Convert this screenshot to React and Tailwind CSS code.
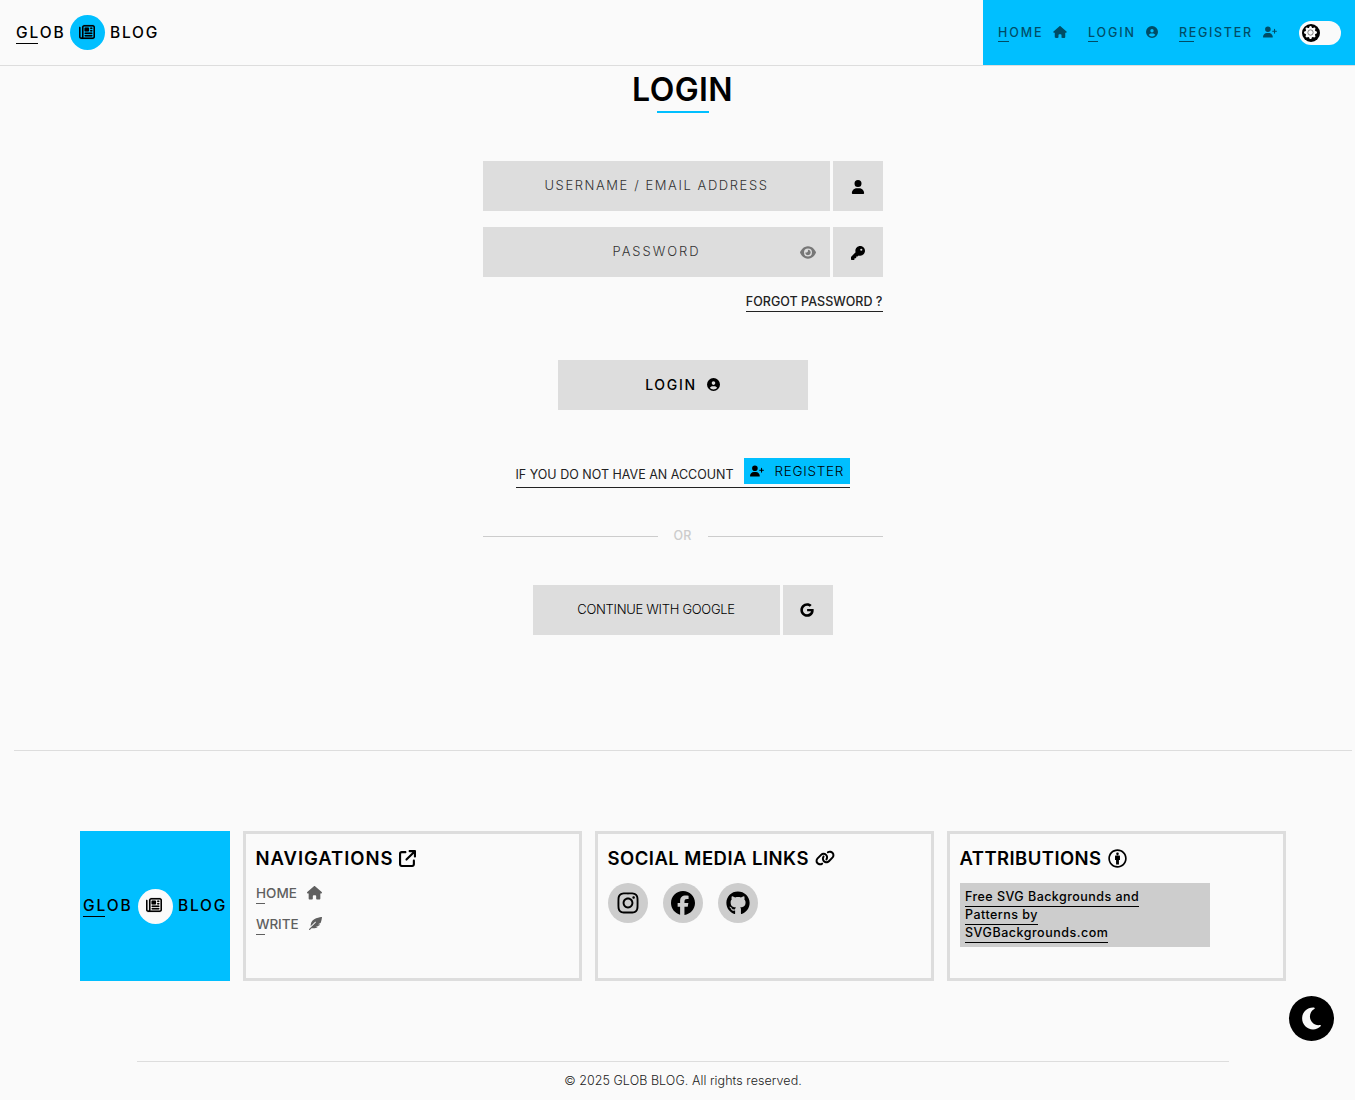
import {
  FaRegNewspaper, FaHouse, FaCircleUser, FaUserPlus, FaUser, FaKey, FaEye, FaGoogle,
  FaArrowUpRightFromSquare, FaLink, FaInstagram, FaFacebook, FaGithub, FaCreativeCommonsBy, FaMoon,
} from "react-icons/fa6";
import { FaFeatherAlt } from "react-icons/fa";
import { BsGearFill } from "react-icons/bs";

function Logo({ circle, text, icon }) {
  return (
    <div className="flex h-[35px] items-center text-[15.5px] font-medium leading-[15px] whitespace-nowrap">
      <div className={"w-[54px] " + text}>
        <div className="tracking-[1.9px] pt-[4px]">GLOB</div>
        <div className="mt-[3px] h-px w-[22px] bg-black" />
      </div>
      <div className={"flex h-[35px] w-[35px] items-center justify-center rounded-full " + circle}>
        <FaRegNewspaper className={"h-[16px] w-[16px] stroke-black stroke-[5px] " + icon} />
      </div>
      <div className={"ml-[5px] tracking-[1.8px] " + text}>BLOG</div>
    </div>
  );
}

function NavItem({ label, line, icon, box }) {
  return (
    <a className={"flex " + box}>
      <span className="flex flex-col">
        <span className="pt-[26px]">{label}</span>
        <span className={"mt-[2px] h-px bg-black " + line} />
      </span>
      <span className="ml-auto pt-[26px]">{icon}</span>
    </a>
  );
}

function Field({ label, icon }) {
  return (
    <div className="flex h-[50px] gap-[3px]">
      <div className="flex w-[347px] items-center justify-center bg-[#ddd] pb-px pl-px text-[13px] font-light leading-none text-[#333]">
        {label}
      </div>
      <div className="flex w-[50px] items-center justify-center bg-[#ddd] pt-[2px]">{icon}</div>
    </div>
  );
}

function Card({ title, icon, children }) {
  return (
    <section className="h-[150px] w-[339px] border-[3px] border-[#ddd] pl-[10px] pt-[14px]">
      <h2 className="-ml-[0.5px] flex h-[20px] items-center gap-[6px] whitespace-nowrap text-[18.5px] font-semibold leading-none">
        {title}
        {icon}
      </h2>
      {children}
    </section>
  );
}

function FooterLink({ label, icon }) {
  return (
    <a className="flex h-[31px] w-[66px] items-start justify-between text-[13.5px] font-medium leading-[14px] text-[#5f5f5f]">
      <span>
        <span className="block">{label}</span>
        <span className="mt-[3px] block h-px w-[9px] bg-[#5f5f5f]" />
      </span>
      {icon}
    </a>
  );
}

export default function App() {
  return (
    <div className="relative flex h-[1100px] w-[1355px] flex-col items-center overflow-hidden bg-[#fafafa] font-['Inter',sans-serif] text-black">
      <header className="flex h-[66px] w-full justify-between border-b border-[#ddd]">
        <div className="pl-[16px] pt-[15px]">
          <Logo circle="bg-[#00bfff]" text="" icon="mb-[1px] mr-px" />
        </div>
        <nav className="flex w-[372px] bg-[#00bfff] pl-[15px] text-[12.5px] font-medium leading-[13px]">
          <div className="flex gap-[21px] opacity-60">
            <NavItem box="w-[69px]" line="w-[11px]" label={<span className="tracking-[1.9px]">HOME</span>} icon={<FaHouse className="h-[12px] w-[14px]" />} />
            <NavItem box="w-[70px]" line="w-[10px]" label={<span className="tracking-[1.87px]">LOGIN</span>} icon={<FaCircleUser className="h-[12px] w-[12px]" />} />
            <NavItem box="w-[98px]" line="w-[15px]" label={<span className="tracking-[1.68px]">REGISTER</span>} icon={<FaUserPlus className="h-[12px] w-[14px]" />} />
          </div>
          <div className="ml-[22px] mt-[21px] flex h-[24px] w-[42px] items-center rounded-full bg-[#fafafa] pl-[3px]">
            <div className="flex h-[18px] w-[18px] items-center justify-center rounded-full bg-black pb-[2px] pr-[2px]">
              <svg viewBox="0 0 16 16" className="h-[13px] w-[13px]">
                <BsGearFill size={16} color="#fafafa" />
                <circle cx="8" cy="8" r="3.3" fill="#fafafa" stroke="#777" strokeWidth="1.1" />
              </svg>
            </div>
          </div>
        </nav>
      </header>

      <main className="flex w-[400px] flex-col items-center pl-[10px] box-content">
        <h1 className="pt-[8px] text-[32px] font-semibold leading-[32px] tracking-[0.4px]">LOGIN</h1>
        <div className="mt-[5px] h-[2px] w-[52px] bg-[#00bfff]" />

        <div className="mt-[48px] flex flex-col gap-[16px]">
          <Field label={<span className="tracking-[1.58px]">USERNAME / EMAIL ADDRESS</span>} icon={<FaUser className="h-[14px] w-[14px]" />} />
          <div className="relative">
            <Field label={<span className="tracking-[1.94px]">PASSWORD</span>} icon={<FaKey className="h-[14px] w-[14px]" />} />
            <FaEye className="absolute left-[317px] top-[18px] h-[15px] w-[16px] text-[#777]" />
          </div>
        </div>
        <a className="mt-[18px] self-end border-b border-[#222] pb-[3px] text-[12.5px] font-medium leading-[13px] tracking-[0.03px] text-[#222]">FORGOT PASSWORD ?</a>

        <button className="mt-[48px] flex h-[50px] w-[250px] items-center justify-center bg-[#ddd] text-[14px] font-medium leading-none">
          <span className="tracking-[1.72px]">LOGIN</span>
          <FaCircleUser className="mb-px ml-[10px] h-[13px] w-[13px]" />
        </button>

        <div className="mt-[48px] flex h-[30px] w-[334px] justify-between border-b border-[#222]">
          <span className="pt-[10px] text-[12.5px] leading-[13px] text-[#222]">IF YOU DO NOT HAVE AN ACCOUNT</span>
          <span className="flex h-[26px] w-[106px] items-center bg-[#00bfff] pl-[6px] text-[13.5px] font-light leading-none">
            <FaUserPlus className="mr-[11px] h-[14px] w-[14px]" />
            <span className="pt-px tracking-[0.7px]">REGISTER</span>
          </span>
        </div>

        <div className="mt-[41px] flex h-[14px] w-full items-center justify-between text-[12.5px] font-medium leading-none text-[#ccc]">
          <span className="mt-px h-px w-[175px] bg-[#ccc]" />
          <span className="tracking-[0.2px]">OR</span>
          <span className="mt-px h-px w-[175px] bg-[#ccc]" />
        </div>

        <div className="mt-[42px] flex h-[50px] w-[300px] gap-[3px]">
          <button className="flex w-[247px] items-center justify-center bg-[#ddd] pb-px text-[13px] font-light leading-none tracking-[-0.29px]">CONTINUE WITH GOOGLE</button>
          <button className="flex w-[50px] items-center justify-center bg-[#ddd] pr-px"><FaGoogle className="h-[14px] w-[14px]" /></button>
        </div>
      </main>

      <div className="mt-[115px] ml-[11px] h-px w-[1338px] shrink-0 bg-[#ddd]" />

      <footer className="flex w-full flex-col">
        <div className="ml-[80px] mt-[80px] flex gap-[13px]">
          <div className="flex h-[150px] w-[150px] items-center bg-[#00bfff] pl-[3px]">
            <Logo circle="bg-[#fafafa] ml-px" text="-ml-px pb-[2px] first:ml-0" icon="mb-[3px] mr-[3px]" />
          </div>
          <Card title={<span className="tracking-[0.95px]">NAVIGATIONS</span>} icon={<FaArrowUpRightFromSquare className="h-[17px] w-[17px]" />}>
            <div className="mt-[18px]">
              <FooterLink label={<span>HOME</span>} icon={<FaHouse className="h-[13.5px] w-[15px]" />} />
              <FooterLink label={<span className="tracking-[-0.1px]">WRITE</span>} icon={<FaFeatherAlt className="h-[13px] w-[13px]" />} />
            </div>
          </Card>
          <Card title={<span className="tracking-[0.47px]">SOCIAL MEDIA LINKS</span>} icon={<FaLink className="h-[16px] w-[20px]" />}>
            <div className="mt-[15px] flex gap-[15px]">
              <a className="flex h-[40px] w-[40px] items-center justify-center rounded-full bg-[#cdcdcd] pr-px"><FaInstagram size={24} /></a>
              <a className="flex h-[40px] w-[40px] items-center justify-center rounded-full bg-[#cdcdcd] pr-px"><FaFacebook size={24} /></a>
              <a className="flex h-[40px] w-[40px] items-center justify-center rounded-full bg-[#cdcdcd] pr-px"><FaGithub size={24} /></a>
            </div>
          </Card>
          <Card title={<span className="tracking-[0.43px]">ATTRIBUTIONS</span>} icon={<FaCreativeCommonsBy className="h-[19px] w-[19px]" />}>
            <div className="mt-[15px] flex h-[64px] w-[250px] flex-col items-start bg-[#cdcdcd] pl-[5px] pt-[6px] text-[12.5px] font-medium leading-[15px]">
              <span className="border-b border-black pb-[2px] tracking-[0.46px]">Free SVG Backgrounds and</span>
              <span className="border-b border-black pb-[2px] tracking-[0.48px]">Patterns by</span>
              <span className="border-b border-black pb-[2px] tracking-[0.52px]">SVGBackgrounds.com</span>
            </div>
          </Card>
        </div>
        <div className="ml-[137px] mt-[80px] h-px w-[1092px] bg-[#ddd]" />
        <p className="ml-[11px] mt-[12px] text-center text-[12.5px] font-light leading-[14px] tracking-[0.06px] text-[#222]">© 2025 GLOB BLOG. All rights reserved.</p>
      </footer>

      <button className="absolute left-[1289px] top-[996px] flex h-[45px] w-[45px] items-center justify-center rounded-full bg-black text-[#fafafa]">
        <FaMoon size={25} />
      </button>
    </div>
  );
}
